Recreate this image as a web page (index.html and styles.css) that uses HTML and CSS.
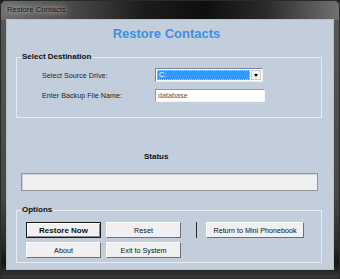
FILE: index.html
```html
<!DOCTYPE html>
<html lang="en">
<head>
  <meta charset="UTF-8">
  <title>Restore Contacts</title>
  <link rel="stylesheet" href="styles.css">
</head>
<body>
  <div class="window">
    <div class="titlebar">Restore Contacts</div>

    <div class="client">
      <h1 class="heading">Restore Contacts</h1>

      <!-- Source -->
      <fieldset class="group">
        <legend>Select Destination</legend>
        <div class="field first">
          <label>Select Source Drive:</label>
          <div class="drive">
            <div class="drive-value">C:</div>
            <div class="drive-arrow"><span class="caret"></span></div>
          </div>
        </div>
        <div class="field">
          <label for="backup-name">Enter Backup File Name:</label>
          <input type="text" id="backup-name" class="file-input" value="database">
        </div>
      </fieldset>

      <div class="status-label">Status</div>
      <div class="status-bar"></div>

      <!-- Options -->
      <fieldset class="group options">
        <legend>Options</legend>
        <div class="options-body">
          <div class="btn-grid">
            <button class="btn default">Restore Now</button>
            <button class="btn">Reset</button>
            <button class="btn">About</button>
            <button class="btn">Exit to System</button>
          </div>
          <div class="divider"></div>
          <button class="btn wide">Return to Mini Phonebook</button>
        </div>
      </fieldset>
    </div>
  </div>
</body>
</html>
```

FILE: styles.css
```css
* {
  margin: 0;
  padding: 0;
  box-sizing: border-box;
  font-family: 'Liberation Sans', Arial, sans-serif;
}

body {
  background-color: #1c1c1c;
  width: 340px;
  height: 279px;
  overflow: hidden;
}

.window {
  width: 340px;
  height: 279px;
  display: flex;
  flex-direction: column;
  padding: 0 7px 10px 7px;
  border-radius: 6px 6px 0 0;
  background:
    linear-gradient(to right, #6e6e6e 0%, #505050 18%, #1c1c1c 42%, #0e0e0e 60%, #2a2a2a 78%, #727272 100%) top / 100% 20px no-repeat,
    linear-gradient(#585858, #474747 70%, #2a2a2a 88%, #151515 94%, #3a3a3a);
  box-shadow: inset 0 0 0 1px #2a2a2a;
}

.titlebar {
  height: 20px;
  line-height: 19px;
  padding-left: 0;
  font-size: 7.6px;
  color: #141414;
  text-shadow: 0 0 4px #d8d8d8, 0 0 8px #c0c0c0;
}

.client {
  flex: 1;
  background-color: #c2cedb;
  box-shadow: 0 0 0 1px #b8bec5;
  display: flex;
  flex-direction: column;
}

.heading {
  height: 28px;
  line-height: 28px;
  text-align: center;
  padding-right: 7px;
  font-size: 13px;
  font-weight: bold;
  color: #3d8fe3;
}

.group {
  margin: 4px 11px 0 9px;
  padding: 0 4px 15px 4px;
  border: 1px solid #e6ebf1;
  min-width: 0;
}

.group legend {
  padding: 0 1px;
  font-size: 8px;
  line-height: 10px;
  font-weight: bold;
  color: #111;
}

.field {
  display: flex;
  align-items: center;
  padding-left: 21px;
  margin-top: 7px;
}

.field.first {
  margin-top: 6px;
}

.field label {
  width: 113px;
  font-size: 7.2px;
  color: #1e1e1e;
}

.drive {
  width: 108px;
  height: 14px;
  display: flex;
  padding: 1px;
  background-color: #fff;
  border: 1px solid;
  border-color: #7b838b #eef1f4 #eef1f4 #7b838b;
}

.drive-value {
  flex: 1;
  background-color: #3399ff;
  border: 1px dotted #a9cdf5;
  color: #fff;
  font-size: 7px;
  line-height: 8px;
  padding-left: 1px;
}

.drive-arrow {
  width: 10px;
  margin-left: 1px;
  background-color: #f2f2f2;
  border: 1px solid #c9c9c9;
  display: flex;
  align-items: center;
  justify-content: center;
}

.caret {
  border-left: 2.5px solid transparent;
  border-right: 2.5px solid transparent;
  border-top: 3px solid #000;
}

.file-input {
  width: 110px;
  height: 13px;
  padding: 0 2px;
  background-color: #fff;
  border: 1px solid;
  border-color: #8f9aa5 #f4f6f8 #f4f6f8 #8f9aa5;
  font-size: 7.2px;
  color: #555;
  outline: none;
}

.status-label {
  margin-top: 34px;
  padding-left: 137px;
  font-size: 8px;
  line-height: 10px;
  font-weight: bold;
  color: #111;
}

.status-bar {
  margin: 11px 15px 0 14px;
  height: 18px;
  background-color: #efefef;
  border: 1px solid #8e969e;
  box-shadow: inset 1px 1px 0 #cfcfcf;
}

.group.options {
  margin-top: 14px;
  padding-bottom: 4px;
}

.options-body {
  display: flex;
  align-items: flex-start;
  padding-left: 5px;
  margin-top: 7px;
}

.btn-grid {
  display: grid;
  grid-template-columns: 75px 75px;
  grid-auto-rows: 16px;
  gap: 4px 5px;
}

.btn {
  height: 16px;
  background-color: #f0f0f0;
  border: 1px solid;
  border-color: #fff #707070 #707070 #fff;
  font-size: 7.2px;
  color: #111;
  cursor: pointer;
}

.btn.default {
  border: 1px solid #1a1a1a;
  box-shadow: inset 1px 1px 0 #fff, inset -1px -1px 0 #8a8a8a;
  font-size: 8px;
  font-weight: bold;
}

.btn.wide {
  width: 98px;
}

.divider {
  width: 1px;
  height: 16px;
  margin: 0 9px 0 15px;
  background-color: #2e2e2e;
}
```
